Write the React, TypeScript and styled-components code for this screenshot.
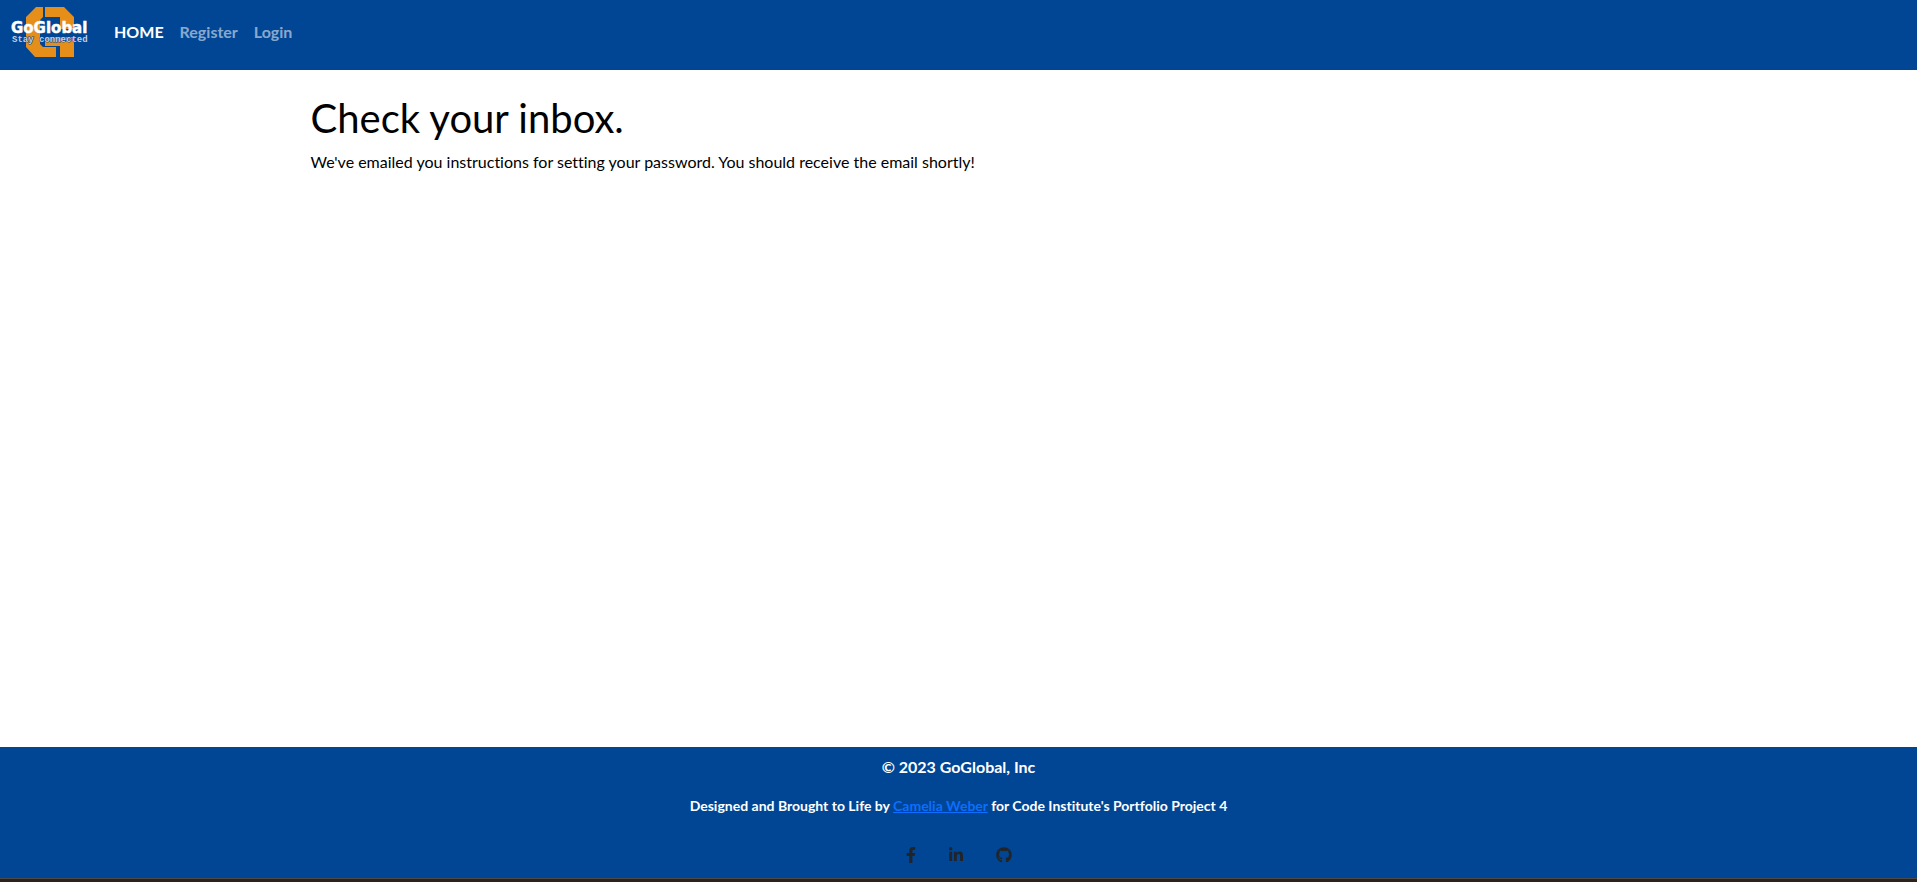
import React from "react";
import styled, { createGlobalStyle } from "styled-components";
import { FaFacebookF, FaLinkedinIn, FaGithub } from "react-icons/fa";

const GlobalStyle = createGlobalStyle`
  *, *::before, *::after { box-sizing: border-box; }
  body {
    margin: 0;
    background: #ffffff;
    color: #000000;
    font-family: Lato, "Open Sans", sans-serif;
    font-size: 16px;
    line-height: 24px;
    font-variant-ligatures: none;
  }
`;

const Page = styled.div`
  display: flex;
  flex-direction: column;
  min-height: 100vh;
`;

const Header = styled.header`
  display: flex;
  align-items: flex-start;
  gap: 16px;
  padding: 4px 8px 8px;
  background: #004695;
`;

const Brand = styled.a`
  display: block;
  height: 58px;
`;

const LogoSvg = styled.svg`
  display: block;
  overflow: visible;
`;

const Nav = styled.nav`
  display: flex;
  padding-top: 8px;
`;

const NavLink = styled.a<{ $active?: boolean }>`
  padding: 8px;
  font-weight: 700;
  text-decoration: none;
  color: ${({ $active }) => ($active ? "#ffffff" : "rgba(255, 255, 255, 0.55)")};
`;

const Main = styled.main`
  flex: 1;
  width: 100%;
  max-width: 1320px;
  margin: 0 auto;
  padding: 24px 12px;
`;

const Title = styled.h1`
  margin: 0 0 8px;
  font-size: 40px;
  line-height: 48px;
  font-weight: 400;
`;

const Message = styled.p`
  margin: 0;
`;

const Footer = styled.footer`
  display: flex;
  flex-direction: column;
  align-items: center;
  padding: 8px 12px;
  background: #004695;
  border-bottom: 1px solid #4c4a48;
  color: #ffffff;
  font-weight: 700;
  text-align: center;
`;

const Copyright = styled.p`
  margin: 0 0 16px;
`;

const Credit = styled.p`
  margin: 0 0 24px;
  font-size: 14px;
  line-height: 21px;
`;

const CreditLink = styled.a`
  color: #0d6efd;
`;

const SocialList = styled.ul`
  display: flex;
  gap: 33px;
  margin: 0;
  padding: 0;
  list-style: none;
`;

const SocialLink = styled.a<{ $width: number }>`
  display: flex;
  align-items: center;
  height: 30px;
  color: #212529;

  svg {
    width: ${({ $width }) => $width}px;
    height: 16px;
  }
`;

const BottomEdge = styled.div`
  height: 3px;
  background: #2d211b;
`;

const Logo = () => (
  <LogoSvg width="82" height="58" viewBox="8 4 82 58" role="img" aria-label="GoGlobal">
    <path
      fill="#e58e1a"
      d="M36 7H43V17L40 20V44L43 47H56V57H35L26 47V17ZM45 7H64L74 17V29H60V17H45ZM45 37H74V57H60V46H45Z"
    />
    <text
      x="11"
      y="33"
      fontFamily="DejaVu Sans, sans-serif"
      fontSize="15"
      fontWeight="700"
      fill="#ffffff"
      stroke="#ffffff"
      strokeWidth="0.5"
    >
      GoGlobal
    </text>
    <text
      x="12"
      y="42"
      fontFamily="Liberation Mono, monospace"
      fontSize="9"
      fontWeight="700"
      fill="#c3d1e4"
      stroke="#004695"
      strokeWidth="1"
      paintOrder="stroke"
    >
      Stay connected
    </text>
  </LogoSvg>
);

const navItems = [
  { label: "HOME", active: true },
  { label: "Register", active: false },
  { label: "Login", active: false },
];

const socials = [
  { label: "Facebook", Icon: FaFacebookF, width: 10 },
  { label: "LinkedIn", Icon: FaLinkedinIn, width: 14 },
  { label: "GitHub", Icon: FaGithub, width: 16 },
];

export default function App() {
  return (
    <>
      <GlobalStyle />
      <Page>
        <Header>
          <Brand href="#">
            <Logo />
          </Brand>
          <Nav>
            {navItems.map(({ label, active }) => (
              <NavLink key={label} href="#" $active={active}>
                {label}
              </NavLink>
            ))}
          </Nav>
        </Header>
        <Main>
          <Title>Check your inbox.</Title>
          <Message>
            We've emailed you instructions for setting your password. You should receive the email shortly!
          </Message>
        </Main>
        <Footer>
          <Copyright>© 2023 GoGlobal, Inc</Copyright>
          <Credit>
            Designed and Brought to Life by <CreditLink href="#">Camelia Weber</CreditLink> for Code
            Institute's Portfolio Project 4
          </Credit>
          <SocialList>
            {socials.map(({ label, Icon, width }) => (
              <li key={label}>
                <SocialLink href="#" aria-label={label} $width={width}>
                  <Icon />
                </SocialLink>
              </li>
            ))}
          </SocialList>
        </Footer>
        <BottomEdge />
      </Page>
    </>
  );
}
